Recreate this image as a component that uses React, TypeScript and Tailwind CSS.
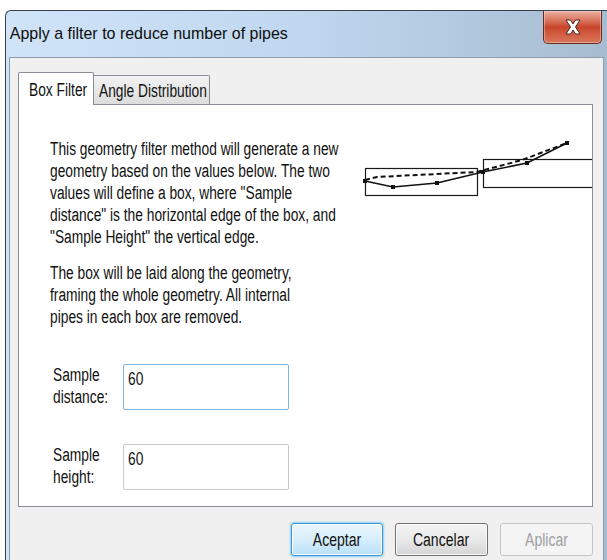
import React from 'react';

const font = "font-['Liberation_Sans',Arial,sans-serif]";

// narrow text line: the dialog font is condensed, so each line is squeezed horizontally
function Line({ children, className = '' }: { children: React.ReactNode; className?: string }) {
    return <div className={`whitespace-nowrap origin-left scale-x-[0.765] ${className}`}>{children}</div>;
}

function CloseButton() {
    return (
        <button className="w-[59px] h-[33px] rounded-b-[5px] border border-t-0 border-[#6b2b20] bg-gradient-to-b from-[#eab0a0] via-[#c9452b] to-[#d9775c] flex items-center justify-center shadow-[inset_0_0_0_1px_rgba(255,255,255,0.35)]">
            <svg width="18" height="16" viewBox="0 0 18 16">
                <path
                    d="M2 1h4.5L9 5l2.5-4H16l-4.5 7 4.5 7h-4.5L9 11l-2.5 4H2l4.5-7z"
                    fill="#ffffff"
                    stroke="#4a2a26"
                    strokeWidth="1"
                    strokeLinejoin="round"
                />
            </svg>
        </button>
    );
}

function PipeSketch() {
    const solid: [number, number][] = [[3, 43], [31, 49], [75, 45], [121, 34], [165, 25], [205, 5]];
    const dashed = '3,42 15,39 115,34 160,22 205,5';
    return (
        <svg width="230" height="70" viewBox="0 0 230 70" className="shrink-0">
            <rect x="3.5" y="30.5" width="112" height="27" fill="none" stroke="#1a1a1a" strokeWidth="1.2" />
            <rect x="121.5" y="21.5" width="140" height="28" fill="none" stroke="#1a1a1a" strokeWidth="1.2" />
            <polyline points={dashed} fill="none" stroke="#111" strokeWidth="2" strokeDasharray="5 3" />
            <polyline points={solid.map(p => p.join(',')).join(' ')} fill="none" stroke="#111" strokeWidth="1.6" />
            {solid.map(([x, y]) => (
                <rect key={x} x={x - 2} y={y - 2} width="4" height="4" fill="#111" />
            ))}
        </svg>
    );
}

function Field({ first, second, value, focused }: { first: string; second: string; value: string; focused?: boolean }) {
    return (
        <div className="flex items-start">
            <div className="w-[70px] pl-[34px] box-content text-[18px] leading-[22px] text-[#111]">
                <Line>{first}</Line>
                <Line>{second}</Line>
            </div>
            <div
                className={
                    focused
                        ? 'w-[166px] h-[46px] rounded-[2px] border border-[#7fb3e0] bg-white pl-[4px] pt-[3px] text-[18px] leading-[22px] text-[#111]'
                        : 'w-[166px] h-[46px] rounded-[2px] border border-[#c9c9c9] bg-white pl-[4px] pt-[3px] text-[18px] leading-[22px] text-[#111]'
                }
            >
                <Line>{value}</Line>
            </div>
        </div>
    );
}

export default function App() {
    return (
        <div className={`w-[607px] h-[560px] bg-white overflow-hidden ${font}`}>
            <div className="ml-[5px] mt-[10px] w-[602px] h-[550px] flex flex-col border-l border-t border-[#37414d] rounded-tl-[6px] bg-gradient-to-r from-[#d0e4f8] via-[#bfd7ef] to-[#a7bccf]">
                {/* title bar */}
                <div className="h-[46px] flex items-start justify-between">
                    <div className="pl-[4px] pt-[12px] text-[17px] leading-[22px] text-[#0d0d0d] whitespace-nowrap origin-left scale-x-[0.94]">
                        Apply a filter to reduce number of pipes
                    </div>
                    <div className="mr-[5px]">
                        <CloseButton />
                    </div>
                </div>

                {/* client area */}
                <div className="flex-1 ml-[3px] mr-[3px] border-l border-t border-r border-[#8d9db0] bg-[#f0f0f0] flex flex-col pl-[8px] pr-[10px] pt-[14px]">
                    <div className="flex items-end h-[33px] text-[18px] leading-[22px] text-[#111]">
                        <div className="h-[33px] w-[76px] border border-b-0 border-[#898c95] bg-white rounded-t-[2px] pl-[10px] pt-[6px] relative z-10">
                            <Line>Box Filter</Line>
                        </div>
                        <div className="h-[30px] w-[116px] border border-l-0 border-b-0 border-[#898c95] bg-gradient-to-b from-[#f2f2f2] to-[#dcdcdc] rounded-tr-[2px] pl-[5px] pt-[4px]">
                            <Line>Angle Distribution</Line>
                        </div>
                    </div>

                    <div className="-mt-px h-[403px] border border-[#898c95] bg-white flex flex-col">
                        <div className="flex items-start pt-[33px]">
                            <div className="pl-[31px] w-[343px] text-[18px] leading-[22px] text-[#111]">
                                <Line>This geometry filter method will generate a new</Line>
                                <Line>geometry based on the values below. The two</Line>
                                <Line>values will define a box, where "Sample</Line>
                                <Line>distance" is the horizontal edge of the box, and</Line>
                                <Line>"Sample Height" the vertical edge.</Line>
                                <Line className="mt-[14px]">The box will be laid along the geometry,</Line>
                                <Line>framing the whole geometry. All internal</Line>
                                <Line>pipes in each box are removed.</Line>
                            </div>
                            <div className="ml-auto">
                                <PipeSketch />
                            </div>
                        </div>

                        <div className="mt-[36px] flex flex-col gap-[34px]">
                            <Field first="Sample" second="distance:" value="60" focused />
                            <Field first="Sample" second="height:" value="60" />
                        </div>
                    </div>

                    <div className="mt-[16px] flex justify-end gap-[12px] text-[18px] leading-[22px]">
                        <button className="w-[92px] h-[33px] rounded-[3px] border border-[#3c93d6] bg-gradient-to-b from-[#eaf6fd] via-[#d7eefb] to-[#b9e1f8] shadow-[0_0_2px_1px_#8fd0f5,inset_0_0_0_1px_#ffffff] text-[#111]">
                            <span className="inline-block scale-x-[0.78]">Aceptar</span>
                        </button>
                        <button className="w-[93px] h-[33px] rounded-[3px] border border-[#707070] bg-gradient-to-b from-[#f4f4f4] via-[#e9e9e9] to-[#d5d5d5] shadow-[inset_0_0_0_1px_#fcfcfc] text-[#111]">
                            <span className="inline-block scale-x-[0.78]">Cancelar</span>
                        </button>
                        <button className="w-[93px] h-[33px] rounded-[3px] border border-[#c6c6c6] bg-[#f4f4f4] text-[#a0a0a0]">
                            <span className="inline-block scale-x-[0.78]">Aplicar</span>
                        </button>
                    </div>
                </div>
            </div>
        </div>
    );
}
